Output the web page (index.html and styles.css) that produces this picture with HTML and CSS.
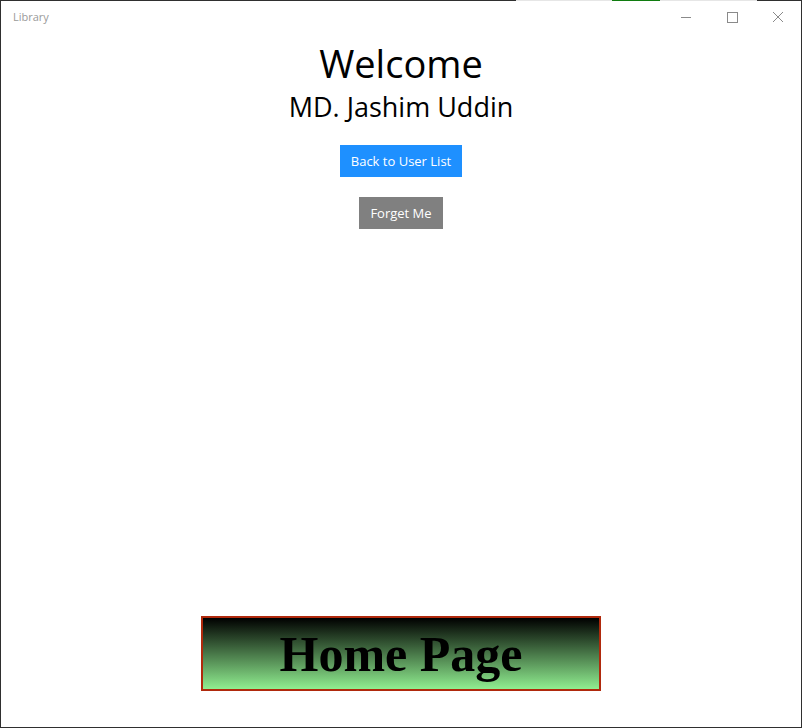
FILE: index.html
```html
<!DOCTYPE html>
<html>
<head>
<meta charset="utf-8">
<title>Library</title>
<link rel="stylesheet" href="styles.css">
</head>
<body>
<div class="window">
  <div class="top-strip"></div>
  <div class="titlebar">
    <span class="app-title">Library</span>
    <div class="caption">
      <span class="cap-btn">
        <svg width="12" height="12" viewBox="0 0 12 12"><path d="M1 6.5H11" stroke="#8a8a8a" stroke-width="1" fill="none"/></svg>
      </span>
      <span class="cap-btn">
        <svg width="12" height="12" viewBox="0 0 12 12"><rect x="1.5" y="1.5" width="10" height="10" stroke="#8a8a8a" stroke-width="1" fill="none"/></svg>
      </span>
      <span class="cap-btn">
        <svg width="12" height="12" viewBox="0 0 12 12"><path d="M1 1L11 11M11 1L1 11" stroke="#8a8a8a" stroke-width="1" fill="none"/></svg>
      </span>
    </div>
  </div>
  <main class="content">
    <h1 class="welcome">Welcome</h1>
    <h2 class="user-name">MD. Jashim Uddin</h2>
    <button class="btn btn-blue">Back to User List</button>
    <button class="btn btn-gray">Forget Me</button>
    <div class="home-banner">Home Page</div>
  </main>
</div>
</body>
</html>
```

FILE: styles.css
```css
html, body {
  margin: 0;
  padding: 0;
  background: #ffffff;
}

.window {
  width: 802px;
  height: 728px;
  box-sizing: border-box;
  border-left: 1px solid #2f2f2f;
  border-right: 1px solid #2f2f2f;
  border-bottom: 1px solid #2f2f2f;
  display: flex;
  flex-direction: column;
  background: #ffffff;
  font-family: "Open Sans", "Noto Sans", sans-serif;
}

.top-strip {
  height: 1px;
  margin: 0 -1px;
  background: linear-gradient(to right,
    #2f2f2f 0, #2f2f2f 516px,
    #e6e6e6 516px, #e6e6e6 612px,
    #107c10 612px, #107c10 660px,
    #e6e6e6 660px, #e6e6e6 757px,
    #2f2f2f 757px, #2f2f2f 100%);
}

.titlebar {
  height: 31px;
  display: flex;
  align-items: center;
  justify-content: space-between;
}

.app-title {
  margin-left: 12px;
  font-size: 11px;
  color: #9a9a9a;
  font-family: "Open Sans", sans-serif;
}

.caption {
  display: flex;
  align-self: stretch;
}

.cap-btn {
  width: 46px;
  display: flex;
  align-items: center;
  justify-content: center;
}

.cap-btn svg {
  display: block;
}

.content {
  flex: 1;
  display: flex;
  flex-direction: column;
  align-items: center;
}

.welcome {
  margin: 7px 0 0;
  font-size: 38px;
  line-height: 48px;
  font-weight: 400;
  color: #000;
}

.user-name {
  margin: 2px 0 0;
  font-size: 27px;
  line-height: 36px;
  font-weight: 400;
  color: #000;
}

.btn {
  border: none;
  height: 32px;
  padding: 0 11px;
  font-family: "Open Sans", sans-serif;
  font-size: 13px;
  color: #ffffff;
}

.btn-blue {
  margin-top: 20px;
  background: #1e90ff;
}

.btn-gray {
  margin-top: 20px;
  background: #808080;
}

.home-banner {
  margin-top: auto;
  margin-bottom: 36px;
  width: 400px;
  height: 75px;
  box-sizing: border-box;
  border: 2px solid #b0290c;
  background: linear-gradient(to bottom, #000000, #90ee90);
  display: flex;
  align-items: center;
  justify-content: center;
  font-family: "Liberation Serif", "Times New Roman", serif;
  font-weight: 700;
  font-size: 50px;
  color: #000;
}
```
